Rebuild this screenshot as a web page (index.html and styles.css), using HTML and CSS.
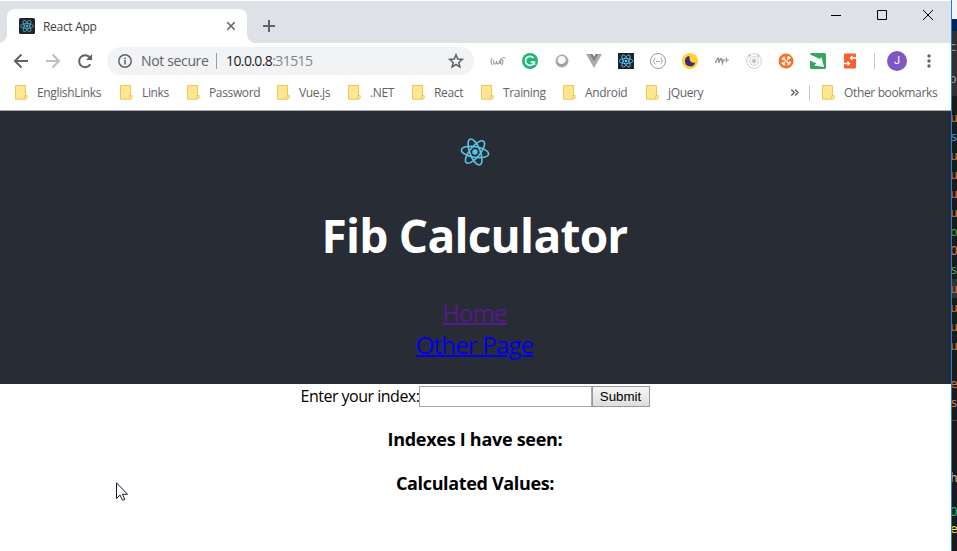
FILE: index.html
```html
<!DOCTYPE html>
<html lang="en">
<head>
<meta charset="utf-8">
<title>React App</title>
<link rel="stylesheet" href="styles.css">
</head>
<body>
<svg class="defs" width="0" height="0">
  <symbol id="atom" viewBox="-12 -12 24 24">
    <g fill="none" stroke="currentColor" stroke-width="1.3">
      <ellipse rx="11" ry="4.2"/><ellipse rx="11" ry="4.2" transform="rotate(60)"/><ellipse rx="11" ry="4.2" transform="rotate(120)"/>
    </g>
    <circle r="2.2" fill="currentColor"/>
  </symbol>
  <symbol id="note" viewBox="0 0 13 15">
    <path d="M.5.5h10v10h1.7v2.5l-1.2 1.2H.5z" fill="#ffe694" stroke="#efc94f"/>
    <path d="M9.500 13.500v-3h2" fill="none" stroke="#efc94f"/>
  </symbol>
</svg>
<div class="desktop">
  <div class="window">
    <div class="tabstrip">
      <div class="tab">
        <svg class="fav" viewBox="0 0 16 16"><rect width="16" height="16" rx="1.5" fill="#20232a"/><use href="#atom" x="1" y="1" width="14" height="14" color="#4fb9d3"/></svg>
        <span class="tab-title">React App</span>
        <svg class="tab-x" viewBox="0 0 10 10"><path d="M1.3 1.3l7.4 7.4M8.7 1.3L1.3 8.7" stroke="#5f6368" stroke-width="1.6"/></svg>
      </div>
      <svg class="plus" viewBox="0 0 12 12"><path d="M6 0v12M0 6h12" stroke="#5f6368" stroke-width="2"/></svg>
      <div class="controls">
        <svg viewBox="0 0 10 10"><path d="M0 5.5h10" stroke="#000"/></svg>
        <svg viewBox="0 0 10 10"><path d="M.5.5h9v9h-9z" fill="none" stroke="#000"/></svg>
        <svg viewBox="0 0 10 10"><path d="M0 0l10 10M10 0L0 10" stroke="#000"/></svg>
      </div>
    </div>
    <div class="toolbar">
      <svg class="nav" viewBox="0 0 16 16"><path d="M15 8H2.5M8.5 1.5L2 8l6.500 6.500" fill="none" stroke="#5f6368" stroke-width="2"/></svg>
      <svg class="nav" viewBox="0 0 16 16"><path d="M1 8h12.500M7.500 1.500L14 8l-6.500 6.500" fill="none" stroke="#bcbec1" stroke-width="2"/></svg>
      <svg class="nav" viewBox="0 0 16 16"><path d="M13.300 11.200A6 6 0 1 1 12.500 4" fill="none" stroke="#5f6368" stroke-width="2"/><path d="M15 1v6H9z" fill="#5f6368"/></svg>
      <div class="omnibox">
        <svg class="info" viewBox="0 0 14 14"><circle cx="7" cy="7" r="6.200" fill="none" stroke="#5f6368" stroke-width="1.500"/><path d="M7 6v4.500M7 3.500v1.600" stroke="#5f6368" stroke-width="1.600"/></svg>
        <span class="secure">Not secure</span>
        <span class="url">10.0.0.8<span class="port">:31515</span></span>
        <svg class="star" viewBox="0 0 16 16"><path d="M8 1.800l1.700 4.300 4.600.3-3.500 3 1.100 4.500L8 11.500l-3.900 2.400 1.100-4.500-3.500-3 4.600-.3z" fill="none" stroke="#5f6368" stroke-width="1.500"/></svg>
      </div>
      <div class="extensions">
        <svg viewBox="0 0 16 16" fill="none" stroke="#999" stroke-width="1.200"><path d="M2.200 5.500Q0 8.500 2.200 12M12 6q2 3-.5 6M4 7.500q-1 3.500.8 3.500T6.500 8q0 3 1.500 3T9.500 7.500M10.500 11V7q0-1.500 1.500-1.500M9.500 8h2M12.500 4.500l3 .5"/></svg>
        <svg viewBox="0 0 16 16"><circle cx="8" cy="8" r="8" fill="#1cb876"/><path d="M11.500 5A4.500 4.500 0 1 0 12.300 9H8.500M12.300 9v3" fill="none" stroke="#fff" stroke-width="1.700"/></svg>
        <svg viewBox="0 0 16 16"><circle cx="8" cy="8" r="6.500" fill="#aaa"/><circle cx="7.700" cy="7" r="4" fill="#f7f7f7"/><path d="M2.500 10q5 5 10-1" fill="none" stroke="#999" stroke-width="1.300"/></svg>
        <svg viewBox="0 0 16 16"><path d="M0 1h3.500L8 9l4.500-8H16L8 15z" fill="#aaa"/><path d="M3.500 1h3L8 3.700 9.500 1h3L8 9z" fill="#7f7f7f"/></svg>
        <svg viewBox="0 0 16 16"><rect width="16" height="16" fill="#20232a"/><use href="#atom" x="0.500" y="0.500" width="15" height="15" color="#5ac8f5"/></svg>
        <svg viewBox="0 0 16 16" fill="none" stroke="#999"><circle cx="8" cy="8" r="7.500"/><path d="M5.500 5q-1.200 0-1.200 1.500T3.300 8q1 0 1 1.500T5.500 11M10.500 5q1.200 0 1.200 1.500t1 1.500q-1 0-1 1.500T10.500 11" stroke-width=".9"/><path d="M6 8.500h4" stroke-dasharray="1 .5"/></svg>
        <svg viewBox="0 0 16 16"><circle cx="8" cy="8" r="8" fill="#fdd42f"/><path d="M7.500 3a5.200 5.200 0 1 0 5.700 6.500Q7 11 7.500 3z" fill="#3c2a87"/></svg>
        <svg viewBox="0 0 16 16" fill="none" stroke="#999"><path d="M1.500 10Q4 3 4.500 6t0 4Q7 4 7.500 6t1 4l1-3.500" stroke-width="1.500"/><path d="M12.500 4.500v5M10 7h5" stroke-width="1.200"/></svg>
        <svg viewBox="0 0 16 16" fill="none" stroke="#ccc"><circle cx="8" cy="8" r="7.400"/><circle cx="8" cy="8" r="4.300"/><circle cx="8" cy="8" r="1.900" fill="#bbb"/><circle cx="3.500" cy="2.500" r="1" fill="#bbb"/><circle cx="12.500" cy="3" r="1" fill="#bbb"/></svg>
        <svg viewBox="0 0 16 16"><circle cx="8" cy="8" r="7.500" fill="#fb7023"/><path d="M4.200 6.800L6.800 4.200M9.500 3.800l2.700 1.500M12.300 8.500L10 12M4 9.500l2.800 2.700" fill="none" stroke="#fff" stroke-width="2.200"/><path d="M6 6l4 4M11 5L9 7M5 11l2-2" stroke="#fff" stroke-width="1.200"/></svg>
        <svg viewBox="0 0 16 16"><rect width="16" height="16" rx="1.500" fill="#34a85a"/><path d="M0 1.500L10 6l1.500-2L14 14 4 12.500l2.500-2L0 7.500z" fill="#fff"/></svg>
        <svg viewBox="0 0 16 16"><rect x="2" y=".5" width="12" height="15" rx="1" fill="#ff5c2c"/><path d="M14 5H8.500M10.500 3L8.500 5l2 2M2 10.500h5.500M5.500 8.500l2 2-2 2" fill="none" stroke="#fff" stroke-width="1.400"/></svg>
      </div>
      <div class="divider"></div>
      <div class="avatar">J</div>
      <svg class="dots" viewBox="0 0 4 14" fill="#5f6368"><circle cx="2" cy="2" r="1.700"/><circle cx="2" cy="7" r="1.700"/><circle cx="2" cy="12" r="1.700"/></svg>
    </div>
    <div class="bookmarks">
      <div class="bm"><svg><use href="#note"/></svg><span>EnglishLinks</span></div>
      <div class="bm"><svg><use href="#note"/></svg><span>Links</span></div>
      <div class="bm"><svg><use href="#note"/></svg><span>Password</span></div>
      <div class="bm"><svg><use href="#note"/></svg><span>Vue.js</span></div>
      <div class="bm"><svg><use href="#note"/></svg><span>.NET</span></div>
      <div class="bm"><svg><use href="#note"/></svg><span>React</span></div>
      <div class="bm"><svg><use href="#note"/></svg><span>Training</span></div>
      <div class="bm"><svg><use href="#note"/></svg><span>Android</span></div>
      <div class="bm"><svg><use href="#note"/></svg><span>jQuery</span></div>
      <svg class="more" viewBox="0 0 8 7"><path d="M.8.5l3 3-3 3M4.500.5l3 3-3 3" fill="none" stroke="#5f6368" stroke-width="1.400"/></svg>
      <div class="bm other"><svg><use href="#note"/></svg><span>Other bookmarks</span></div>
    </div>
    <header class="app-header">
      <svg class="logo"><use href="#atom"/></svg>
      <h1>Fib Calculator</h1>
      <a class="visited" href="#">Home</a>
      <a href="#other">Other Page</a>
    </header>
    <main>
      <form class="form"><label for="idx">Enter your index:</label><input id="idx"><button type="button">Submit</button></form>
      <h3 class="seen">Indexes I have seen:</h3>
      <h3 class="values">Calculated Values:</h3>
    </main>
    <svg class="cursor" viewBox="0 0 13 20"><path d="M.5.800v15.700l3.600-3.400 2.400 5.200 2.300-1-2.300-5h5z" fill="#fff" stroke="#1a1a2a"/></svg>
  </div>
  <div class="editor">
    <div class="ed-top"></div><div class="ed-title"></div>
    <div class="ed-tabs"><span>c</span><span>oc</span></div>
    <div class="code">
      <i>u</i><i class="b">s</i><i>u</i><i>u</i><i>u</i><i>u</i><i class="g">o</i><i>O</i><i class="g">s</i><i class="hl">u</i><i>u</i><i>u</i><i>u</i><i></i><i>e</i><i>s</i>
    </div>
    <div class="terminal"><i>h</i><i class="t">O</i><i class="y">e</i></div>
  </div>
</div>
</body>
</html>
```
FILE: styles.css
```css
* { box-sizing: border-box; }
body { margin: 0; overflow: hidden; font-family: "Open Sans", "Noto Sans", sans-serif; }
svg { display: block; flex: none; }
.defs { position: absolute; }
.desktop { display: flex; width: 957px; height: 551px; }
.window { position: relative; width: 952px; flex: none; background: #fff; border-right: 1px solid #1883d7; overflow: hidden; }

.tabstrip { display: flex; height: 43px; background: #dee1e6; border-top: 1px solid #fff; padding: 8px 18px 0 7px; }
.tab { position: relative; display: flex; align-items: center; width: 240px; height: 34px; padding: 0 11px 0 12px; background: #fff; border-radius: 8px 8px 0 0; }
.tab::before, .tab::after { content: ""; position: absolute; bottom: 0; width: 8px; height: 8px; }
.tab::before { left: -8px; background: radial-gradient(circle at 0 0, #dee1e6 7.5px, #fff 8px); }
.tab::after { right: -8px; background: radial-gradient(circle at 100% 0, #dee1e6 7.5px, #fff 8px); }
.fav { width: 16px; height: 16px; }
.tab-title { margin-left: 8px; font-size: 12px; letter-spacing: -.3px; color: #3c4043; white-space: nowrap; }
.tab-x { width: 10px; height: 10px; margin-left: auto; }
.plus { width: 12px; height: 12px; margin: 11px 0 0 16px; }
.controls { display: flex; gap: 36px; margin: 1px 0 0 auto; }
.controls svg { width: 10px; height: 10px; }

.toolbar { display: flex; align-items: center; height: 36px; padding-left: 13px; }
.nav { width: 16px; height: 16px; margin-right: 16px; }
.omnibox { display: flex; align-items: center; width: 367px; height: 28px; margin-left: -2px; padding: 0 10px 0 11px; border-radius: 14px; background: #f1f3f4; font-size: 14px; white-space: nowrap; }
.info { width: 14px; height: 14px; }
.secure { width: 76px; margin-left: 9px; padding-right: 8px; border-right: 1px solid #9aa0a6; line-height: 16px; letter-spacing: -.35px; color: #5f6368; }
.url { margin-left: 9px; letter-spacing: -.6px; line-height: 16px; color: #202124; }
.port { color: #80868b; }
.star { width: 16px; height: 16px; margin-left: auto; }
.extensions { display: flex; gap: 16px; margin-left: 16px; }
.extensions svg { width: 16px; height: 16px; }
.divider { width: 1px; height: 16px; margin: 0 12px 0 16px; background: #c6c8ca; }
.avatar { width: 20px; height: 20px; border-radius: 50%; background: #7e57c2; color: #fff; font: 11px/20px Roboto, sans-serif; text-align: center; }
.dots { width: 4px; height: 14px; margin-left: 20px; }

.bookmarks { display: grid; grid-template-columns: 105px 67px 90px 71px 64px 69px 82px 83px 144px 19px 129px; align-items: center; height: 32px; padding: 0 0 4px 15px; border-bottom: 1px solid #a9abb0; }
.bm { display: flex; align-items: center; height: 16px; font-size: 12px; line-height: 16px; letter-spacing: -.35px; color: #5f6368; white-space: nowrap; }
.bm svg { width: 13px; height: 15px; margin-right: 9px; }
.more { width: 9px; height: 7px; }
.other { padding-left: 12px; border-left: 1px solid #c6c8ca; }

.app-header { display: flex; flex-direction: column; align-items: center; height: 273px; padding: 26px 2px 0 0; background: #282c34; font-size: 24px; line-height: 32px; }
.logo { width: 30px; height: 30px; color: #61dafb; opacity: .88; transform: rotate(9deg); }
h1 { margin: 36px 0 30px; font-size: 46px; line-height: 64px; letter-spacing: -.75px; color: #fff; white-space: nowrap; }
.app-header a { color: #00e; letter-spacing: -.8px; text-decoration-thickness: 2px; }
.app-header a.visited { color: #551a8b; }
main { padding-right: 1px; text-align: center; color: #000; }
.form { display: flex; justify-content: center; align-items: center; height: 25px; font-size: 16px; }
label { width: 118px; padding-bottom: 2px; text-align: left; letter-spacing: -.5px; white-space: nowrap; }
input { width: 173px; height: 21px; border: 1px solid #a9a9a9; padding: 1px; }
button { width: 58px; height: 21px; padding: 0; border: 1px solid #999; background: linear-gradient(#f6f6f6, #ddd); font: 13.333px "Liberation Sans", sans-serif; }
h3 { margin: 0; font-size: 18px; line-height: 24px; white-space: nowrap; }
.seen { margin-top: 18px; letter-spacing: -.28px; }
.values { margin-top: 20px; letter-spacing: -.35px; }
.cursor { position: absolute; left: 116px; top: 482px; width: 13px; height: 20px; }

.editor { width: 5px; overflow: hidden; background: #1a1a1a; font-family: "DejaVu Sans Mono", monospace; font-size: 13px; }
.ed-top { height: 19px; background: #f5f5f5; }
.ed-title { height: 12px; background: #00245a; }
.ed-tabs { display: flex; flex-direction: column; height: 65px; background: #303030; color: #999; }
.ed-tabs span { height: 32px; line-height: 32px; margin-left: -3px; }
.code { height: 324px; padding-top: 12px; }
i { display: block; height: 19px; line-height: 19px; text-indent: -2px; font-style: normal; color: #c77752; }
.b { color: #3c8ed8; }
.g { color: #5c9948; }
.hl { background: #333; }
.terminal { padding-top: 47px; border-top: 1px solid #444; }
.terminal i { color: #bbb; height: 17px; }
.terminal .t { margin-top: 17px; color: #12b981; }
.terminal .y { color: #e5e510; }
```
